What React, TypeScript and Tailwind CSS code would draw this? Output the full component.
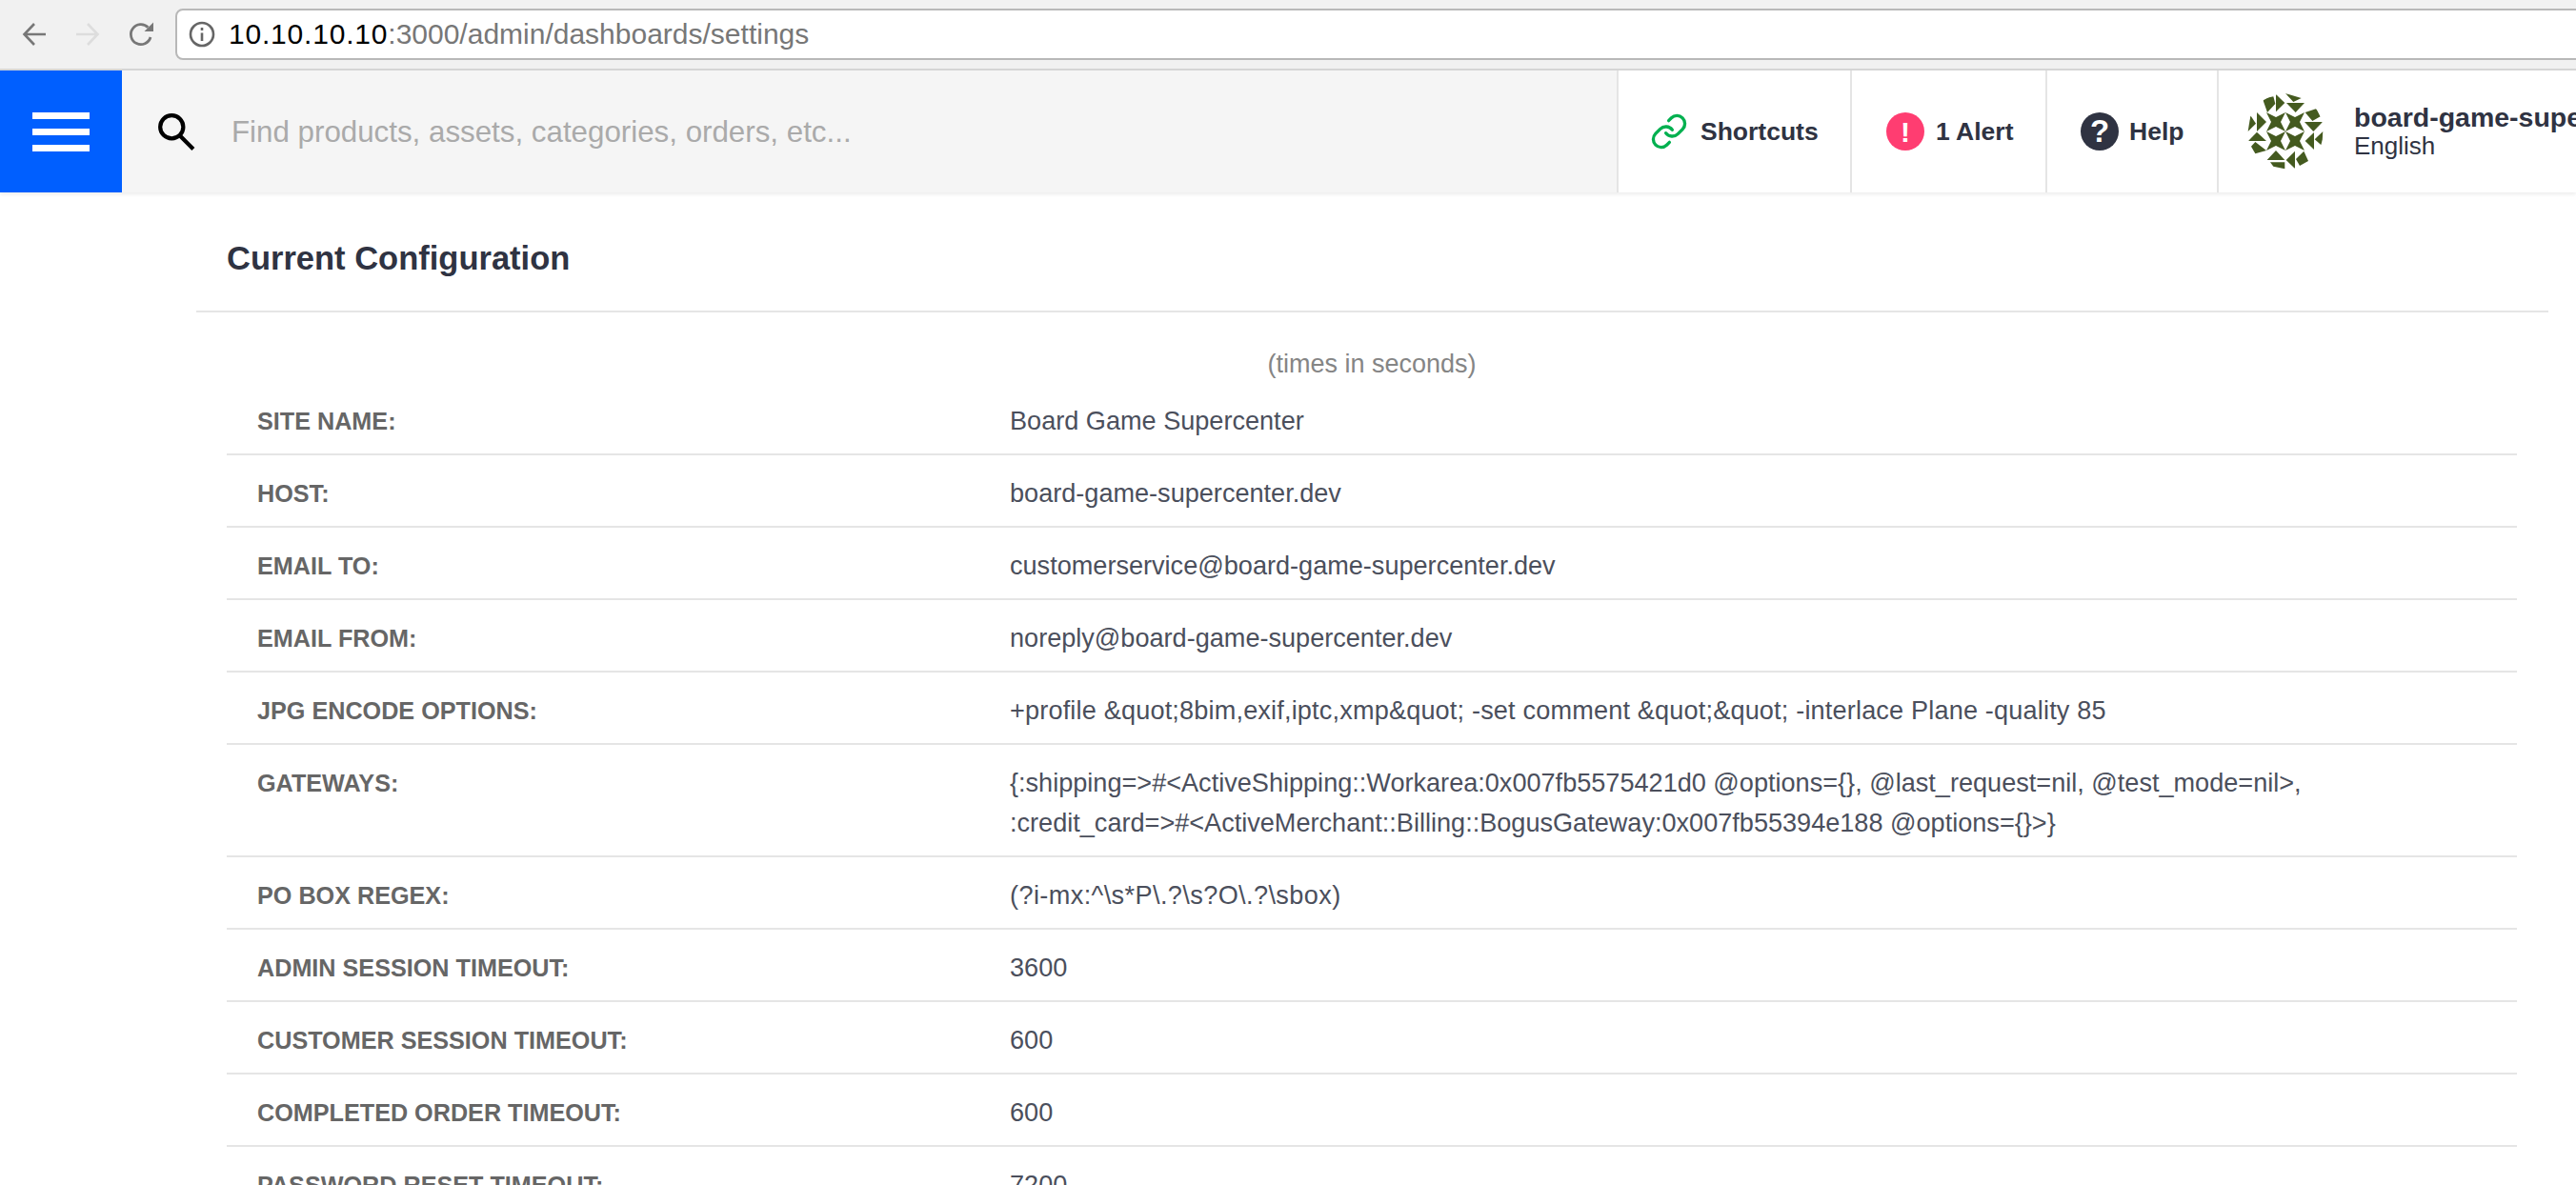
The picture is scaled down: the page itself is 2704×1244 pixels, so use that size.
import { Link } from "lucide-react";

const rows: { label: string; value: string[]; tracking?: string }[] = [
  { label: "Site Name:", value: ["Board Game Supercenter"] },
  { label: "Host:", value: ["board-game-supercenter.dev"] },
  { label: "Email To:", value: ["customerservice@board-game-supercenter.dev"] },
  { label: "Email From:", value: ["noreply@board-game-supercenter.dev"] },
  {
    label: "JPG Encode Options:",
    value: ['+profile &quot;8bim,exif,iptc,xmp&quot; -set comment &quot;&quot; -interlace Plane -quality 85'],
    tracking: "tracking-[0.17px]",
  },
  {
    label: "Gateways:",
    value: [
      "{:shipping=>#<ActiveShipping::Workarea:0x007fb5575421d0 @options={}, @last_request=nil, @test_mode=nil>,",
      ":credit_card=>#<ActiveMerchant::Billing::BogusGateway:0x007fb55394e188 @options={}>}",
    ],
  },
  { label: "PO Box Regex:", value: ["(?i-mx:^\\s*P\\.?\\s?O\\.?\\sbox)"], tracking: "tracking-[0.4px]" },
  { label: "Admin Session Timeout:", value: ["3600"] },
  { label: "Customer Session Timeout:", value: ["600"] },
  { label: "Completed Order Timeout:", value: ["600"] },
  { label: "Password Reset Timeout:", value: ["7200"] },
];

// four-point stars in the middle of the avatar
const stars = [
  [90, 90],
  [150, 90],
  [90, 150],
  [150, 150],
];

const triangles = [
  "120,0 170,15 145,27",
  "123,30 180,30 152,60",
  "90,3 118,30 90,58",
  "48,17 82,10 88,33 63,60",
  "182,60 218,48 230,73 205,87",
  "180,90 237,90 208,120",
  "238,120 235,165 212,145",
  "210,123 210,177 182,150",
  "30,60 60,90 30,120",
  "10,70 27,95 2,120",
  "30,122 60,150 3,150",
  "25,153 60,180 25,190 12,167",
  "90,180 118,210 62,210",
  "72,217 118,217 118,238 82,230",
  "150,182 150,237 122,210",
  "178,182 192,213 165,228 153,207",
];

function Avatar() {
  return (
    <svg viewBox="0 0 240 240" className="w-[80px] h-[80px] shrink-0">
      <defs>
        <clipPath id="avatar-clip">
          <circle cx="120" cy="120" r="120" />
        </clipPath>
      </defs>
      <g clipPath="url(#avatar-clip)" fill="#445a1f">
        {triangles.map((p) => (
          <polygon key={p} points={p} />
        ))}
        {stars.map(([x, y]) => (
          <polygon
            key={`${x}-${y}`}
            transform={`translate(${x} ${y})`}
            points="-30,-30 0,-15 30,-30 15,0 30,30 0,15 -30,30 -15,0"
          />
        ))}
      </g>
    </svg>
  );
}

function BrowserBar() {
  return (
    <div className="flex items-center h-[74px] bg-[#f1f1f1] border-b-2 border-[#d6d6d6] pl-[23px]">
      {/* back */}
      <svg viewBox="0 0 26 26" className="w-[26px] h-[26px] shrink-0" fill="none" stroke="#777777" strokeWidth="2.6">
        <path d="M25 13H3M13 2 2.5 13 13 24" />
      </svg>
      {/* forward */}
      <svg viewBox="0 0 26 26" className="w-[26px] h-[26px] shrink-0 ml-[30px]" fill="none" stroke="#dddddd" strokeWidth="2.6">
        <path d="M1 13h22M13 2l10.5 11L13 24" />
      </svg>
      {/* reload */}
      <svg viewBox="0 0 28 28" className="w-[28px] h-[28px] shrink-0 ml-[29px]" fill="none" stroke="#777777" strokeWidth="2.8">
        <path d="M24 17a10.5 10.5 0 1 1-2.6-10.2" />
        <path d="M27 1.5V11H17.5z" fill="#777777" stroke="none" />
      </svg>
      <div className="flex items-center h-[54px] ml-[22px] w-[2700px] shrink-0 bg-white border-2 border-[#b8b8b8] rounded-l-[8px] pl-[12px]">
        <svg viewBox="0 0 28 28" className="w-[28px] h-[28px] shrink-0" fill="none" stroke="#666666" strokeWidth="2.6">
          <circle cx="14" cy="14" r="12" />
          <path d="M14 12.5V21M14 7v3" />
        </svg>
        <span className="ml-[14px] text-[30px] text-[#777777] font-['Liberation_Sans',sans-serif] leading-none">
          <span className="text-black tracking-[0.8px]">10.10.10.10</span>:3000/admin/dashboards/settings
        </span>
      </div>
    </div>
  );
}

function HeaderCell({ children, className }: { children: React.ReactNode; className: string }) {
  return (
    <div className={`flex items-center shrink-0 h-full bg-white border-l-2 border-[#e5e5e5] text-[26.5px] font-bold text-[#2f3342] ${className}`}>
      {children}
    </div>
  );
}

function AppHeader() {
  return (
    <header className="relative flex h-[128px] bg-[#f5f5f5] shadow-[0_2px_4px_rgba(0,0,0,0.08)]">
      <div className="flex flex-col justify-center gap-[10px] w-[128px] shrink-0 bg-[#005fff] px-[34px]">
        <div className="h-[7px] w-[60px] bg-white" />
        <div className="h-[7px] w-[60px] bg-white" />
        <div className="h-[7px] w-[60px] bg-white" />
      </div>
      <div className="flex items-center flex-1 pl-[37px]">
        <svg viewBox="0 0 38 38" className="w-[40px] h-[40px] shrink-0" fill="none" stroke="#000000" strokeWidth="4">
          <circle cx="14.5" cy="14.5" r="11.5" />
          <path d="M22.5 23 36 36.5" />
        </svg>
        <span className="ml-[38px] translate-y-[1px] text-[31.3px] text-[#aaaaaa]">Find products, assets, categories, orders, etc...</span>
      </div>
      <HeaderCell className="w-[245px] pl-[33px]">
        <Link size={40} strokeWidth={2} color="#00b04f" className="shrink-0" />
        <span className="ml-[13px] translate-y-[1px]">Shortcuts</span>
      </HeaderCell>
      <HeaderCell className="w-[205px] pl-[36px]">
        <div className="flex items-center justify-center w-[40px] h-[40px] rounded-full bg-[#ff3d71] text-white text-[30px] shrink-0">!</div>
        <span className="ml-[12px] translate-y-[1px]">1 Alert</span>
      </HeaderCell>
      <HeaderCell className="w-[180px] pl-[35px]">
        <div className="flex items-center justify-center w-[40px] h-[40px] rounded-full bg-[#2f3342] text-white text-[33px] shrink-0">?</div>
        <span className="ml-[11px] translate-y-[1px]">Help</span>
      </HeaderCell>
      <HeaderCell className="w-[377px] pl-[30px] overflow-hidden">
        <Avatar />
        <div className="ml-[32px] flex flex-col">
          <span className="text-[28.5px] leading-[30px] whitespace-nowrap">board-game-supercenter</span>
          <span className="text-[26px] leading-[30px] font-normal">English</span>
        </div>
      </HeaderCell>
    </header>
  );
}

export default function App() {
  return (
    <div className="h-[1244px] w-[2704px] overflow-hidden bg-white font-['Liberation_Sans',sans-serif]">
      <BrowserBar />
      <AppHeader />
      <main className="pl-[206px] pr-[29px]">
        <h2 className="h-[126px] pt-[48px] pl-[32px] text-[34.5px] leading-[42px] font-bold text-[#2f3342] border-b-2 border-[#e5e5e5]">
          Current Configuration
        </h2>
        <div className="pl-[32px] pr-[33px]">
          <p className="pt-[34px] h-[74px] text-center text-[27px] leading-[40px] text-[#858585]">(times in seconds)</p>
          {rows.map((row) => (
            <div key={row.label} className="flex pt-[19px] pb-[13px] border-b-2 border-[#e5e5e5]">
              <div className="w-[822px] shrink-0 pl-[32px] text-[25.2px] leading-[42px] font-bold uppercase text-[#666666]">
                {row.label}
              </div>
              <div className={`text-[27.1px] leading-[42px] text-[#4b4f5c] ${row.tracking ?? ""}`}>
                {row.value.map((line) => (
                  <div key={line} className="whitespace-nowrap">{line}</div>
                ))}
              </div>
            </div>
          ))}
        </div>
      </main>
    </div>
  );
}
